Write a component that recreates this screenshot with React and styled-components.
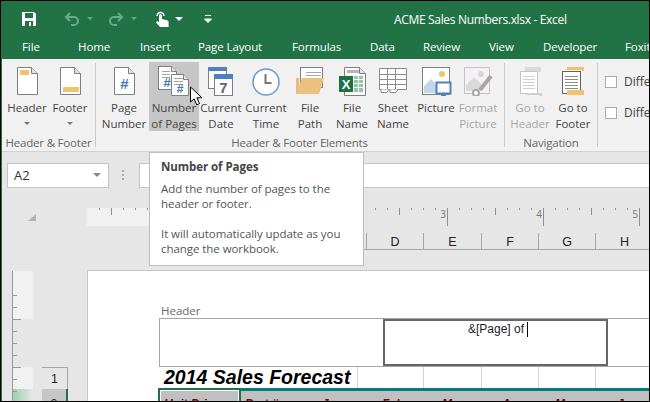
import styled, { createGlobalStyle } from 'styled-components';

const GREEN = '#217346';
const UI_FONT = '"Open Sans", "Noto Sans", sans-serif';

const GlobalStyle = createGlobalStyle`
	html, body {
		margin: 0;
		padding: 0;
		background: #fff;
	}
	* {
		box-sizing: border-box;
	}
`;

const Frame = styled.div`
	position: relative;
	width: 650px;
	height: 402px;
	border: 1px solid #000;
	overflow: hidden;
	font-family: ${UI_FONT};
	background: #e6e6e6;
`;

const Window = styled.div`
	display: flex;
	flex-direction: column;
	height: 100%;
	border-left: 1px solid ${GREEN};
`;

const TitleBar = styled.div`
	display: flex;
	align-items: center;
	height: 36px;
	flex-shrink: 0;
	background: ${GREEN};
	color: #fff;
	padding-left: 19px;
`;

const QatIcon = styled.svg`
	display: block;
	flex-shrink: 0;
	margin-left: ${(p) => p.$gap || 0}px;
`;

const DocTitle = styled.div`
	position: absolute;
	left: 393px;
	top: 10px;
	font-size: 12px;
	letter-spacing: -0.33px;
	line-height: 18px;
	white-space: nowrap;
	color: #fff;
`;

const TabBar = styled.div`
	display: flex;
	height: 22px;
	flex-shrink: 0;
	background: ${GREEN};
	padding-left: 20px;
	white-space: nowrap;
`;

const Tab = styled.div`
	width: ${(p) => p.$w}px;
	flex-shrink: 0;
	color: #fff;
	font-size: 11.5px;
	letter-spacing: -0.1px;
	line-height: 20px;
`;

const Ribbon = styled.div`
	display: flex;
	align-items: flex-start;
	height: 93px;
	flex-shrink: 0;
	padding-top: 3px;
	background: #f1f1f1;
	border-bottom: 1px solid #d2d2d2;
`;

const Group = styled.div`
	display: flex;
	flex-direction: column;
	flex-shrink: 0;
	width: ${(p) => p.$w}px;
	padding-left: ${(p) => p.$pad || 0}px;
`;

const Buttons = styled.div`
	display: flex;
	height: 69px;
`;

const GroupLabel = styled.div`
	margin-top: 4px;
	font-size: 11.5px;
	letter-spacing: -0.2px;
	line-height: 16px;
	color: #666;
	text-align: center;
	white-space: nowrap;
	padding-right: ${(p) => p.$shift || 0}px;
`;

const Separator = styled.div`
	flex-shrink: 0;
	width: 1px;
	height: 84px;
	margin-top: 1px;
	background: #c9c9c9;
`;

const RibbonButton = styled.div`
	position: relative;
	display: flex;
	flex-direction: column;
	align-items: center;
	flex-shrink: 0;
	width: ${(p) => p.$w}px;
	padding-top: 2px;
	background: ${(p) => (p.$active ? '#c6c6c6' : 'transparent')};
	color: ${(p) => (p.$off ? '#a6a6a6' : '#444')};
`;

const ButtonText = styled.div`
	margin-top: 4px;
	font-size: 11.5px;
	line-height: 16px;
	text-align: center;
	white-space: nowrap;
`;

const Caret = styled.div`
	width: 0;
	height: 0;
	margin: 6px auto 0;
	border-left: 3.5px solid transparent;
	border-right: 3.5px solid transparent;
	border-top: 3.5px solid #777;
`;

const Pointer = styled.svg`
	position: absolute;
	left: 40px;
	top: 24px;
`;

const Options = styled.div`
	display: flex;
	flex-direction: column;
	gap: 14px;
	padding: 11px 0 0 7px;
	white-space: nowrap;
`;

const Option = styled.div`
	display: flex;
	align-items: center;
	gap: 7px;
	height: 17px;
	font-size: 12px;
	color: #444;
`;

const CheckBox = styled.div`
	width: 12px;
	height: 12px;
	background: #fff;
	border: 1px solid #ababab;
`;

const FormulaBar = styled.div`
	display: flex;
	align-items: center;
	height: 35px;
	flex-shrink: 0;
	padding: 11px 0 0 5px;
	background: #e6e6e6;
`;

const NameBox = styled.div`
	display: flex;
	align-items: center;
	justify-content: space-between;
	width: 102px;
	height: 25px;
	padding: 0 7px 0 6px;
	background: #fff;
	border: 1px solid #c6c6c6;
	font-size: 13px;
	color: #333;
`;

const NameCaret = styled.div`
	width: 0;
	height: 0;
	border-left: 4px solid transparent;
	border-right: 4px solid transparent;
	border-top: 4px solid #888;
`;

const Grip = styled.div`
	width: 2px;
	height: 10px;
	margin-left: 13px;
	border-left: 2px dotted #aaa;
`;

const FormulaInput = styled.div`
	flex: 1;
	height: 25px;
	margin-left: 15px;
	background: #fff;
	border: 1px solid #c6c6c6;
	border-right: none;
`;

const Workspace = styled.div`
	display: flex;
	flex: 1;
	min-height: 0;
`;

const Rail = styled.div`
	display: flex;
	flex-direction: column;
	flex-shrink: 0;
	width: 85px;
`;

const CornerMark = styled.svg`
	display: block;
	flex-shrink: 0;
	margin: 27px 0 0 26px;
`;

const RailBody = styled.div`
	display: flex;
	flex-shrink: 0;
	margin-top: 50px;
	padding-left: 10px;
`;

const VerticalRuler = styled.svg`
	display: block;
	flex-shrink: 0;
`;

const RowHeaders = styled.div`
	margin: 96px 0 0 9px;
	width: 26px;
`;

const RowHeader = styled.div`
	height: ${(p) => (p.$selected ? 24 : 22)}px;
	text-align: center;
	font-family: 'Liberation Sans', sans-serif;
	font-size: 12.5px;
	line-height: ${(p) => (p.$selected ? 30 : 22)}px;
	color: #222;
	background: ${(p) => (p.$selected ? '#c6c6c6' : 'transparent')};
	border-top: ${(p) => (p.$selected ? 'none' : '1px solid #a6a6a6')};
	border-right: ${(p) => (p.$selected ? `2px solid ${GREEN}` : '1px solid #a6a6a6')};
`;

const Main = styled.div`
	flex: 1;
	min-width: 0;
	display: flex;
	flex-direction: column;
`;

const TopRuler = styled.svg`
	display: block;
	flex-shrink: 0;
	margin-top: 21px;
`;

const ColumnHeaders = styled.div`
	display: flex;
	flex-shrink: 0;
	height: 17px;
	margin: 7px 0 20px 72px;
	border-bottom: 1px solid #a6a6a6;
`;

const ColumnHeader = styled.div`
	flex-shrink: 0;
	width: ${(p) => p.$w}px;
	height: 16px;
	text-align: center;
	font-family: 'Liberation Sans', sans-serif;
	font-size: 12.5px;
	line-height: 18px;
	color: #222;
	border-right: ${(p) => (p.$last ? 'none' : '1px solid #a6a6a6')};
`;

const Page = styled.div`
	flex: 1;
	min-height: 0;
	overflow: hidden;
	padding: 33px 0 0 71px;
	background: #fff;
	border-top: 1px solid #c6c6c6;
	border-left: 1px solid #c6c6c6;
	font-family: 'Liberation Sans', sans-serif;
`;

const HeaderCaption = styled.div`
	font-family: ${UI_FONT};
	font-size: 11.5px;
	line-height: 14px;
	color: #666;
	padding-left: 2px;
`;

const HeaderArea = styled.div`
	height: 49px;
	padding: 0 0 0 223px;
	border: 1px solid #a6a6a6;
	border-right: none;
`;

const HeaderSection = styled.div`
	display: flex;
	justify-content: center;
	width: 225px;
	height: 47px;
	padding: 1px 0 0 5px;
	font-size: 12px;
	line-height: 14px;
	color: #222;
	border: 2px solid #666;
`;

const TextCursor = styled.span`
	display: inline-block;
	width: 1px;
	height: 15px;
	margin-left: 3px;
	vertical-align: top;
	background: #000;
`;

const TitleRow = styled.div`
	display: flex;
	height: 21px;
`;

const TitleCell = styled.div`
	flex-shrink: 0;
	width: 199px;
	padding-left: 5px;
	font-size: 19.5px;
	line-height: 20px;
	font-weight: 700;
	font-style: italic;
	color: #000;
	white-space: nowrap;
	border-right: 1px solid #d4d4d4;
`;

const EmptyCell = styled.div`
	flex-shrink: 0;
	width: ${(p) => p.$w}px;
	border-right: 1px solid #d4d4d4;
`;

const DataRow = styled.div`
	display: flex;
	height: 20px;
	margin-left: -1px;
`;

const SelectedCell = styled.div`
	flex-shrink: 0;
	width: 83px;
	padding: 7px 0 0 4px;
	background: #c0c0c0;
	box-shadow: inset 0 0 0 1px #fff;
	border: 2px solid ${GREEN};
	border-bottom: none;
	font-size: 12px;
	font-weight: 700;
	font-style: italic;
	color: #800000;
`;

const DataCells = styled.div`
	display: flex;
	flex: 1;
	padding-top: 6px;
	background: #c0c0c0;
	border-top: 3px solid #007e7e;
`;

const DataCell = styled.div`
	flex-shrink: 0;
	width: ${(p) => p.$w}px;
	padding-left: ${(p) => p.$pad}px;
	font-size: 12px;
	font-weight: 700;
	font-style: italic;
	color: #800000;
	white-space: nowrap;
`;

const Tooltip = styled.div`
	position: absolute;
	left: 148px;
	top: 151px;
	width: 215px;
	height: 114px;
	padding: 6px 11px;
	background: #fff;
	border: 1px solid #bdbdbd;
	font-size: 11.5px;
	letter-spacing: -0.06px;
	line-height: 15px;
	color: #555;
`;

const TooltipTitle = styled.div`
	font-weight: 700;
	color: #444;
	margin-bottom: 7px;
`;

const TooltipText = styled.p`
	margin: 0 0 15px;
	white-space: nowrap;
`;

/* ---- drawings ---- */

const STROKE = '#7f7f7f';

const Sheet = ({ x = 5.5, y = 3.5, w = 20, h = 27, fold = 6, fill = '#fff', stroke = STROKE }) => (
	<>
		<path d={`M${x} ${y}h${w - fold}l${fold} ${fold}v${h - fold}h${-w}z`} fill={fill} stroke={stroke} />
		<path d={`M${x + w - fold} ${y}v${fold}h${fold}`} fill="#e4e4e4" stroke={stroke} />
	</>
);

const Lines = ({ x, y, w, n, step = 3, color = '#a6a6a6' }) => (
	<path d={Array.from({ length: n }, (_, i) => `M${x} ${y + i * step + 0.5}h${w}`).join('')} stroke={color} fill="none" />
);

const Hash = ({ x, y, size = 15, color = '#3f78b5' }) => (
	<text x={x} y={y} fontSize={size} fontWeight="700" fontFamily="Liberation Sans, sans-serif" fill={color} textAnchor="middle">
		#
	</text>
);

const Icon = ({ children, w = 32 }) => (
	<svg width={w} height="32" viewBox={`0 0 ${w} 32`} style={{ display: 'block', flexShrink: 0 }}>
		{children}
	</svg>
);

const HeaderIcon = () => (
	<Icon>
		<Sheet x={6.5} />
		<rect x="9" y="6" width="9" height="5" fill="#f0c36f" />
	</Icon>
);

const FooterIcon = () => (
	<Icon>
		<Sheet x={6.5} />
		<rect x="9" y="23" width="16" height="5" fill="#f0c36f" />
	</Icon>
);

const PageNumberIcon = () => (
	<Icon>
		<Sheet x={6.5} />
		<Hash x={16.5} y={25} />
	</Icon>
);

const PagesIcon = () => (
	<Icon w={40}>
		<Sheet x={4.5} y={2.5} w={18} h={23} fold={5} />
		<Lines x={8} y={7} w={8} n={3} />
		<Hash x={13} y={23} size={13} />
		<Sheet x={17.5} y={10.5} w={17} h={21} fold={5} />
		<Lines x={20} y={14} w={9} n={3} />
		<Hash x={26} y={29} size={12} />
	</Icon>
);

const CalendarIcon = () => (
	<Icon>
		<rect x="3.5" y="3.5" width="18" height="21" fill="#fff" stroke={STROKE} />
		<rect x="3" y="3" width="19" height="4" fill="#4f81bd" />
		<rect x="9.5" y="10.5" width="18" height="21" fill="#fff" stroke={STROKE} />
		<rect x="9" y="10" width="19" height="5" fill="#4f81bd" />
		<text x="18.5" y="29" fontSize="15" fontWeight="700" fontFamily="Liberation Sans, sans-serif" fill="#666" textAnchor="middle">
			7
		</text>
	</Icon>
);

const ClockIcon = () => (
	<Icon>
		<circle cx="16" cy="18" r="13" fill="#fff" stroke="#6b9bd0" strokeWidth="1.5" />
		<path d="M15.5 10v9h6" fill="none" stroke="#777" strokeWidth="2" />
	</Icon>
);

const FilePathIcon = () => (
	<Icon>
		<path d="M2 14h3v16H2z" fill="#e9bd78" />
		<rect x="6.5" y="3.5" width="22" height="20" fill="#fff" stroke={STROKE} />
		<Lines x={12} y={8} w={15} n={3} />
		<path d="M2 30l6-16h22l-5 16z" fill="#ecc07f" />
	</Icon>
);

const FileNameIcon = () => (
	<Icon>
		<Sheet x={8.5} y={3.5} w={21} h={28} fold={6} />
		<rect x="11" y="6" width="12" height="3" fill="#b5b5b5" />
		<rect x="18" y="12" width="9" height="16" fill="#8fc7a5" />
		<path d="M18 15.5h9M18 19.5h9M18 23.5h9M22.5 12v16" stroke="#fff" />
		<rect x="3" y="12" width="14" height="16" fill="#1e7145" />
		<text x="10" y="25" fontSize="13" fontWeight="700" fontFamily="Liberation Sans, sans-serif" fill="#fff" textAnchor="middle">
			X
		</text>
	</Icon>
);

const SheetNameIcon = () => (
	<Icon>
		<path
			d="M2.5 4.5h27v21h-27zM2.5 10.5h27M2.5 15.5h27M2.5 20.5h27M10.5 4.5v21M18.5 4.5v21"
			fill="#fff"
			stroke="#8a8a8a"
		/>
		<path d="M4 25.5v3h6l2-3M13 25.5v3h6l2-3" fill="#fff" stroke="#8a8a8a" />
	</Icon>
);

const PictureIcon = () => (
	<Icon>
		<rect x="2.5" y="3.5" width="27" height="27" fill="#fff" stroke={STROKE} />
		<circle cx="22" cy="10" r="3" fill="#f0c36f" />
		<path d="M4 29v-7l7-7 9 9v5z" fill="#c4d6ea" />
		<rect x="16.5" y="18.5" width="14" height="11" fill="#fff" stroke="#4f81bd" strokeWidth="2" />
		<path d="M21 31h5" stroke="#4f81bd" strokeWidth="2" />
	</Icon>
);

const FormatPictureIcon = () => (
	<Icon>
		<rect x="2.5" y="3.5" width="25" height="26" fill="#f4f0f4" stroke="#c4c4c4" />
		<circle cx="19" cy="10" r="3" fill="#d9d4da" />
		<path d="M4 27v-6l8-8 9 9-4 5z" fill="#d9d9d9" />
		<path d="M29 12l-11 14" stroke="#a6a6a6" strokeWidth="4" />
		<circle cx="14" cy="29" r="3" fill="#fff" stroke="#a6a6a6" strokeWidth="2" />
	</Icon>
);

const GoToHeaderIcon = () => (
	<Icon>
		<rect x="11" y="3" width="16" height="5" fill="#dcd8dc" />
		<rect x="6.5" y="7.5" width="17" height="22" fill="#fff" stroke="#c4c4c4" />
		<Lines x={9} y={12} w={12} n={5} step={3} color="#d0d0d0" />
		<path d="M12 30h15v2" fill="none" stroke="#d0d0d0" strokeWidth="2" />
	</Icon>
);

const GoToFooterIcon = () => (
	<Icon>
		<rect x="10" y="3" width="17" height="3" fill="#f0c36f" />
		<path d="M26 3v4" stroke="#f0c36f" strokeWidth="2" />
		<rect x="5.5" y="7.5" width="18" height="22" fill="#fff" stroke="#666" />
		<Lines x={8} y={12} w={13} n={5} step={3} color="#8a8a8a" />
		<rect x="10" y="26" width="17" height="5" fill="#f0c36f" />
	</Icon>
);

const rulerTicks = [];
for (let x = 100; x < 650; x += 12) {
	const k = (x - 160) / 12;
	rulerTicks.push({ x, len: k % 8 === 0 ? 18 : k % 4 === 0 ? 7 : 2 });
}

const railTicks = [];
for (let y = 24; y < 131; y += 12) {
	railTicks.push({ y, len: (y - 48) % 48 === 0 ? 8 : 4 });
}

const RULER_WIDTH = 562;

const rows = [
	{ label: 'Part #', w: 81, pad: 4 },
	{ label: 'Jan', w: 60, pad: 0 },
	{ label: 'Feb', w: 60, pad: 0 },
	{ label: 'Mar', w: 60, pad: 0 },
	{ label: 'Apr', w: 53, pad: 0 },
	{ label: 'May', w: 62, pad: 0 },
	{ label: 'Jun', w: 40, pad: 0 }
];

const tabs = [
	{ label: 'File', w: 56 },
	{ label: 'Home', w: 62 },
	{ label: 'Insert', w: 58 },
	{ label: 'Page Layout', w: 94 },
	{ label: 'Formulas', w: 78 },
	{ label: 'Data', w: 53 },
	{ label: 'Review', w: 66 },
	{ label: 'View', w: 54 },
	{ label: 'Developer', w: 82 },
	{ label: 'Foxit', w: 40 }
];

const elements = [
	{ top: 'Page', bottom: 'Number', w: 50, icon: <PageNumberIcon /> },
	{ top: 'Number', bottom: 'of Pages', w: 50, icon: <PagesIcon />, active: true },
	{ top: 'Current', bottom: 'Date', w: 44, icon: <CalendarIcon /> },
	{ top: 'Current', bottom: 'Time', w: 46, icon: <ClockIcon /> },
	{ top: 'File', bottom: 'Path', w: 42, icon: <FilePathIcon /> },
	{ top: 'File', bottom: 'Name', w: 42, icon: <FileNameIcon /> },
	{ top: 'Sheet', bottom: 'Name', w: 40, icon: <SheetNameIcon /> },
	{ top: 'Picture', bottom: '', w: 46, icon: <PictureIcon /> },
	{ top: 'Format', bottom: 'Picture', w: 38, icon: <FormatPictureIcon />, off: true }
];

export default function App() {
	return (
		<Frame>
			<GlobalStyle />
			<Window>
				<TitleBar>
					<QatIcon width="16" height="16" viewBox="0 0 16 16">
						<path d="M1 1h12l2 2v12H1z" fill="#fff" />
						<rect x="4" y="2" width="8" height="5" fill={GREEN} />
						<rect x="4" y="10" width="8" height="5" fill={GREEN} />
						<rect x="8" y="11" width="2" height="4" fill="#fff" />
					</QatIcon>
					<QatIcon $gap={27} width="16" height="16" viewBox="0 0 16 16" fill="none" stroke="#6ea88a" strokeWidth="2">
						<path d="M6 2L2 6l4 4M2 6h8a4 4 0 0 1 0 8H7" />
					</QatIcon>
					<QatIcon $gap={6} width="8" height="8" viewBox="0 0 8 8">
						<path d="M1 2h6L4 5z" fill="#6ea88a" />
					</QatIcon>
					<QatIcon $gap={14} width="16" height="16" viewBox="0 0 16 16" fill="none" stroke="#6ea88a" strokeWidth="2">
						<path d="M10 2l4 4-4 4M14 6H6a4 4 0 0 0 0 8h3" />
					</QatIcon>
					<QatIcon $gap={6} width="8" height="8" viewBox="0 0 8 8">
						<path d="M1 2h6L4 5z" fill="#6ea88a" />
					</QatIcon>
					<QatIcon $gap={16} width="16" height="18" viewBox="0 0 16 18" fill="none" stroke="#fff">
						<path d="M3 6a3.5 3.5 0 1 1 7 0" strokeWidth="1.5" />
						<path
							d="M5 5.5a1.5 1.5 0 0 1 3 0V9l5 1.2c1 .3 1.6 1 1.6 2V17H6L2 12.5 3 11l2 1.2z"
							fill="#fff"
							stroke="none"
						/>
					</QatIcon>
					<QatIcon $gap={5} width="8" height="8" viewBox="0 0 8 8">
						<path d="M0 2h8L4 6z" fill="#fff" />
					</QatIcon>
					<QatIcon $gap={21} width="8" height="10" viewBox="0 0 8 10">
						<path d="M1 1.5h6M0.5 5h7L4 8.5z" fill="#fff" stroke="#fff" />
					</QatIcon>
					<DocTitle>ACME Sales Numbers.xlsx - Excel</DocTitle>
				</TitleBar>

				<TabBar>
					{tabs.map((t) => (
						<Tab key={t.label} $w={t.w}>
							{t.label}
						</Tab>
					))}
				</TabBar>

				<Ribbon>
					<Group $w={93} $pad={3}>
						<Buttons>
							<RibbonButton $w={44}>
								<HeaderIcon />
								<ButtonText>Header</ButtonText>
								<Caret />
							</RibbonButton>
							<RibbonButton $w={42}>
								<FooterIcon />
								<ButtonText>Footer</ButtonText>
								<Caret />
							</RibbonButton>
						</Buttons>
						<GroupLabel $shift={3}>Header &amp; Footer</GroupLabel>
					</Group>
					<Separator />
					<Group $w={408} $pad={3}>
						<Buttons>
							{elements.map((el) => (
								<RibbonButton key={el.top + el.bottom} $w={el.w} $active={el.active} $off={el.off}>
									{el.icon}
									<ButtonText>
										{el.top}
										<br />
										{el.bottom}
									</ButtonText>
									{el.active && (
										<Pointer width="15" height="21" viewBox="0 0 15 21">
											<path d="M1.5 1v15l3.6-3.2 2.6 6 2.8-1.2-2.6-5.8H13z" fill="#fff" stroke="#000" />
										</Pointer>
									)}
								</RibbonButton>
							))}
						</Buttons>
						<GroupLabel $shift={4}>Header &amp; Footer Elements</GroupLabel>
					</Group>
					<Separator />
					<Group $w={92} $pad={4}>
						<Buttons>
							<RibbonButton $w={42} $off>
								<GoToHeaderIcon />
								<ButtonText>
									Go to
									<br />
									Header
								</ButtonText>
							</RibbonButton>
							<RibbonButton $w={44}>
								<GoToFooterIcon />
								<ButtonText>
									Go to
									<br />
									Footer
								</ButtonText>
							</RibbonButton>
						</Buttons>
						<GroupLabel $shift={4}>Navigation</GroupLabel>
					</Group>
					<Separator />
					<Options>
						<Option>
							<CheckBox />
							Different First Page
						</Option>
						<Option>
							<CheckBox />
							Different Odd &amp; Even Pages
						</Option>
					</Options>
				</Ribbon>

				<FormulaBar>
					<NameBox>
						A2
						<NameCaret />
					</NameBox>
					<Grip />
					<FormulaInput />
				</FormulaBar>

				<Workspace>
					<Rail>
						<CornerMark width="8" height="7" viewBox="0 0 8 7">
							<path d="M8 0v7H0z" fill="#b4b4b4" />
						</CornerMark>
						<RailBody>
							<VerticalRuler width="21" height="131" viewBox="0 0 21 131">
								<defs>
									<linearGradient id="rowMark" x1="0" x2="1" y1="0" y2="0">
										<stop offset="0" stopColor="#9fd0b4" />
										<stop offset="1" stopColor="#e6e6e6" />
									</linearGradient>
								</defs>
								<rect x="1" y="0" width="20" height="48" fill="#f1f1f1" />
								<rect x="1" y="96" width="20" height="22" fill="#f1f1f1" />
								<rect x="1" y="118" width="20" height="13" fill="url(#rowMark)" />
								<path d="M0.5 0v131" stroke="#999" />
								{railTicks.map((t) => (
									<path key={t.y} d={`M1 ${t.y + 0.5}h${t.len}`} stroke="#999" />
								))}
							</VerticalRuler>
							<RowHeaders>
								<RowHeader>1</RowHeader>
								<RowHeader $selected>2</RowHeader>
							</RowHeaders>
						</RailBody>
					</Rail>

					<Main>
						<TopRuler width={RULER_WIDTH} height="18" viewBox={`88 0 ${RULER_WIDTH} 18`}>
							<rect x="88" y="0" width="72" height="18" fill="#f1f1f1" />
							{rulerTicks.map((t) => (
								<path key={t.x} d={`M${t.x + 0.5} 0v${t.len}`} stroke="#8f8f8f" />
							))}
							{[
								[444, '3'],
								[540, '4'],
								[636, '5']
							].map(([x, n]) => (
								<text key={n} x={x} y="10" fontSize="10" fontFamily="Open Sans, sans-serif" fill="#777" textAnchor="middle">
									{n}
								</text>
							))}
						</TopRuler>

						<ColumnHeaders>
							<ColumnHeader $w={208} />
							<ColumnHeader $w={57}>D</ColumnHeader>
							<ColumnHeader $w={58}>E</ColumnHeader>
							<ColumnHeader $w={57}>F</ColumnHeader>
							<ColumnHeader $w={57}>G</ColumnHeader>
							<ColumnHeader $w={57} $last>
								H
							</ColumnHeader>
						</ColumnHeaders>

						<Page>
							<HeaderCaption>Header</HeaderCaption>
							<HeaderArea>
								<HeaderSection>
									<span>
										&amp;[Page] of
										<TextCursor />
									</span>
								</HeaderSection>
							</HeaderArea>
							<TitleRow>
								<TitleCell>2014 Sales Forecast</TitleCell>
								<EmptyCell $w={66} />
								<EmptyCell $w={58} />
								<EmptyCell $w={57} />
								<EmptyCell $w={57} />
							</TitleRow>
							<DataRow>
								<SelectedCell>Unit Price</SelectedCell>
								<DataCells>
									{rows.map((r) => (
										<DataCell key={r.label} $w={r.w} $pad={r.pad}>
											{r.label}
										</DataCell>
									))}
								</DataCells>
							</DataRow>
						</Page>
					</Main>
				</Workspace>
			</Window>

			<Tooltip>
				<TooltipTitle>Number of Pages</TooltipTitle>
				<TooltipText>
					Add the number of pages to the
					<br />
					header or footer.
				</TooltipText>
				<TooltipText>
					It will automatically update as you
					<br />
					change the workbook.
				</TooltipText>
			</Tooltip>
		</Frame>
	);
}
